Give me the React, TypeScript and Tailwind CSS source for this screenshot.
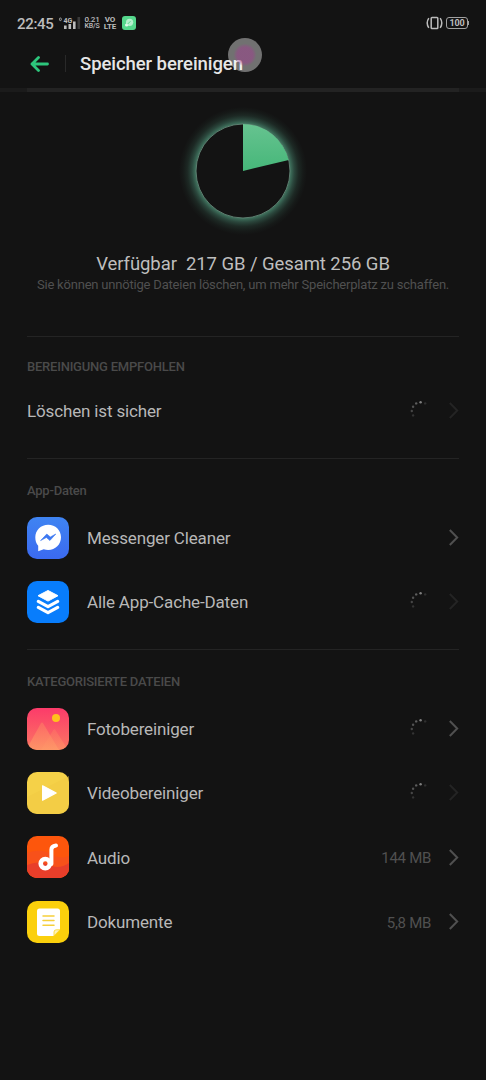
import type { ReactNode } from 'react'

interface Entry {
  label: string
  icon?: ReactNode
  size?: string
  loading?: boolean
  disabled?: boolean
}

const spinnerDots = [
  { x: 10, y: 1.2, opacity: 0.46 },
  { x: 5.6, y: 2.4, opacity: 0.32 },
  { x: 2.5, y: 5.7, opacity: 0.27 },
  { x: 1.2, y: 10, opacity: 0.22 },
  { x: 2.5, y: 14.4, opacity: 0.14 },
  { x: 14.6, y: 2.4, opacity: 0.12 },
]

function Spinner() {
  return (
    <svg className="h-5 w-5 shrink-0" viewBox="0 0 20 20" fill="#fff">
      {spinnerDots.map((dot, i) => (
        <circle key={i} cx={dot.x + 0.6} cy={dot.y} r="1.2" opacity={dot.opacity} />
      ))}
    </svg>
  )
}

function Chevron({ disabled }: { disabled?: boolean }) {
  return (
    <svg
      className={`h-[18px] w-[11px] shrink-0 ${disabled ? 'text-[#242424]' : 'text-[#505050]'}`}
      viewBox="0 0 11 18"
      fill="none"
      stroke="currentColor"
      strokeWidth="2"
    >
      <path d="M1.8 2 9.2 9.5l-7.4 7.5" />
    </svg>
  )
}

function MessengerIcon() {
  return (
    <svg className="h-[42px] w-[42px]" viewBox="0 0 42 42">
      <defs>
        <linearGradient id="messenger" x1="0" y1="0" x2="0" y2="1">
          <stop offset="0" stopColor="#3f84f2" />
          <stop offset="1" stopColor="#3b6af0" />
        </linearGradient>
      </defs>
      <rect width="42" height="42" rx="10" fill="url(#messenger)" />
      <path
        d="M21.2 7.8c7.2 0 12.8 5.4 12.8 12.5S28.4 33 21.2 33c-1.6 0-3.1-.3-4.5-.8L11.2 34.3V28.8C9.2 26.6 8.3 23.7 8.3 20.3c0-7.1 5.7-12.5 12.9-12.5z"
        fill="#fff"
      />
      <path d="m13.6 23.6 6.2-6.6 3.5 3 5.5-3-5.900 6.5-3.5-3z" fill="#3d78f1" stroke="#3d78f1" strokeWidth=".6" />
    </svg>
  )
}

function CacheIcon() {
  return (
    <svg className="h-[42px] w-[42px]" viewBox="0 0 42 42">
      <rect width="42" height="42" rx="10" fill="#087dfc" />
      <path d="m21 9.500 10 5.200-10 5.400-10-5.400z" fill="#fff" stroke="#fff" strokeWidth="1" strokeLinejoin="round" />
      <path d="m11.300 20.400 9.700 5.300 9.700-5.300M11.300 26.400 21 31.700l9.700-5.300" fill="none" stroke="#fff" strokeWidth="3.2" strokeLinecap="round" strokeLinejoin="round" />
    </svg>
  )
}

function PhotoIcon() {
  return (
    <svg className="h-[42px] w-[42px]" viewBox="0 0 42 42">
      <defs>
        <linearGradient id="photo" x1="0" y1="0" x2="0" y2="1">
          <stop offset="0" stopColor="#fc3b6a" />
          <stop offset="1" stopColor="#fb7762" />
        </linearGradient>
        <linearGradient id="hill" x1="0" y1="0" x2="0" y2="1">
          <stop offset="0" stopColor="#fd7065" />
          <stop offset="1" stopColor="#fe9a68" />
        </linearGradient>
        <clipPath id="photoClip">
          <rect width="42" height="42" rx="10" />
        </clipPath>
      </defs>
      <g clipPath="url(#photoClip)">
        <rect width="42" height="42" fill="url(#photo)" />
        <path d="M14 42 26.200 22.200q1.200-1.800 2.400 0L41 42z" fill="url(#hill)" opacity=".6" />
        <path d="M-1 42 13.800 15.400q1.200-1.900 2.400 0L32 42z" fill="url(#hill)" opacity=".8" />
        <circle cx="29" cy="10" r="4" fill="#ffc21c" />
      </g>
    </svg>
  )
}

function VideoIcon() {
  return (
    <svg className="h-[42px] w-[42px]" viewBox="0 0 42 42">
      <rect width="42" height="42" rx="10" fill="#f5d148" />
      <path d="M0 25 42 4v28a10 10 0 0 1-10 10H10A10 10 0 0 1 0 32z" fill="#f2ca42" opacity=".5" />
      <path d="M15.600 13.800v14.400L29.200 21z" fill="#fff" stroke="#fff" strokeWidth="1.2" strokeLinejoin="round" />
    </svg>
  )
}

function AudioIcon() {
  return (
    <svg className="h-[42px] w-[42px]" viewBox="0 0 42 42">
      <defs>
        <clipPath id="audioClip">
          <rect width="42" height="42" rx="10" />
        </clipPath>
      </defs>
      <g clipPath="url(#audioClip)">
        <rect width="42" height="42" fill="#fd560c" />
        <path d="M0 17q14-5 24 1t18 2v22H0z" fill="#f8511a" />
        <path d="M0 29q12-5 22 0t20-2v15H0z" fill="#e83e2a" />
      </g>
      <circle cx="18.3" cy="27.6" r="4.6" fill="none" stroke="#fff" strokeWidth="4.6" />
      <path d="M24.4 28V13.5q0-3.3 4.6-4" fill="none" stroke="#fff" strokeWidth="4" strokeLinecap="round" />
    </svg>
  )
}

function DocumentIcon() {
  return (
    <svg className="h-[42px] w-[42px]" viewBox="0 0 42 42">
      <rect width="42" height="42" rx="10" fill="#fbd00c" />
      <path d="M12.500 7.500h18A2.500 2.500 0 0 1 33 10v18.500L26.500 35h-14a2.500 2.500 0 0 1-2.500-2.500V10a2.500 2.500 0 0 1 2.500-2.500z" fill="#fff" />
      <path d="M27 34.800V31q0-2.200 2.200-2.200H33z" fill="#fff3b8" stroke="#fbd00c" strokeWidth=".7" />
      <path d="M16 15h11M16 19.600h11M16 24.200h11" stroke="#f6cf3a" strokeWidth="1.5" strokeLinecap="round" />
    </svg>
  )
}

const appEntries: Entry[] = [
  { label: 'Messenger Cleaner', icon: <MessengerIcon /> },
  { label: 'Alle App-Cache-Daten', icon: <CacheIcon />, loading: true, disabled: true },
]

const fileEntries: Entry[] = [
  { label: 'Fotobereiniger', icon: <PhotoIcon />, loading: true },
  { label: 'Videobereiniger', icon: <VideoIcon />, loading: true, disabled: true },
  { label: 'Audio', icon: <AudioIcon />, size: '144 MB' },
  { label: 'Dokumente', icon: <DocumentIcon />, size: '5,8 MB' },
]

function Row({ label, icon, size, loading, disabled }: Entry) {
  return (
    <li className="flex h-[64.3px] items-center">
      {icon && <span className="mr-[18px] shrink-0 pt-px">{icon}</span>}
      <span className="flex-1 pt-0.5 text-[17px] leading-6 tracking-[-0.15px] text-[#b8b8b8]">{label}</span>
      {size && <span className="mr-[17px] pt-[3px] text-[15px] leading-5 tracking-[-0.3px] text-[#505050]">{size}</span>}
      {loading && <span className="mr-[18px] pt-px"><Spinner /></span>}
      <Chevron disabled={disabled} />
    </li>
  )
}

function SectionTitle({ children }: { children: ReactNode }) {
  return <h2 className="text-[13px] leading-4 font-medium tracking-[-0.22px] text-[#4a4a4a]">{children}</h2>
}

function StatusBar() {
  return (
    <div className="flex h-[46px] items-center pr-[17px] pl-[17px] text-[#bcbcbc]">
      <span className="w-[41px] pt-px text-[15px] leading-4 font-medium tracking-[-0.3px]">22:45</span>
      <svg className="h-4 w-[23px]" viewBox="0 0 23 16" fill="currentColor">
        <rect x="1.5" y="3" width="1.8" height="2.6" rx=".8" fill="none" stroke="currentColor" strokeWidth=".8" />
        <text x="5.5" y="7.5" fontSize="7" fontWeight="700">4G</text>
        <rect x="6" y="10.5" width="2.6" height="3.5" />
        <rect x="10.5" y="9" width="2.6" height="5" />
        <rect x="15" y="6.5" width="2.6" height="7.5" />
        <rect x="19.5" y="2" width="2.6" height="12" fill="#3a3a3a" />
      </svg>
      <div className="ml-px w-5 text-center leading-[7px] font-medium">
        <p className="text-[8px] tracking-[-0.2px]">0.21</p>
        <p className="text-[7px] tracking-[-0.2px]">KB/S</p>
      </div>
      <div className="ml-px w-[14px] text-center text-[8px] leading-[7px] font-bold tracking-[-0.2px]">
        <p>VO</p>
        <p>LTE</p>
      </div>
      <svg className="ml-[5px] h-[14px] w-[14px]" viewBox="0 0 14 14">
        <rect width="14" height="14" rx="3" fill="#55d78c" />
        <circle cx="7.6" cy="6.3" r="3.6" fill="#b6efcd" />
        <circle cx="4.6" cy="9" r="1.6" fill="#e2f8eb" />
        <path d="m5.5 8.2 3-3" stroke="#55d78c" strokeWidth="1" />
      </svg>
      <svg className="ml-auto h-[14px] w-[17px]" viewBox="0 0 17 14" fill="none" stroke="currentColor" strokeWidth="1.5">
        <rect x="5.2" y="1.5" width="6.6" height="11" rx=".8" />
        <path d="M2.8 2.2Q-.4 7 2.8 11.8M14.2 2.2q3.2 4.8 0 9.6" />
      </svg>
      <div className="ml-[3px] flex h-3 w-[22px] items-center justify-center rounded-[3px] border border-[#a0a0a0] text-[9px] leading-none font-bold tracking-[-0.1px]">
        100
      </div>
      <div className="h-1 w-px bg-[#a0a0a0]" />
    </div>
  )
}

function StorageChart() {
  return (
    <svg className="mx-auto block h-[158px] w-[158px]" viewBox="0 0 158 158">
      <defs>
        <radialGradient id="glow">
          <stop offset=".74" stopColor="#4a8a70" stopOpacity=".8" />
          <stop offset=".8" stopColor="#45806a" stopOpacity=".48" />
          <stop offset=".87" stopColor="#3f7560" stopOpacity=".22" />
          <stop offset=".94" stopColor="#3f7560" stopOpacity=".07" />
          <stop offset="1" stopColor="#3f7560" stopOpacity="0" />
        </radialGradient>
        <linearGradient id="slice" x1="0" y1="0" x2="0" y2="1">
          <stop offset="0" stopColor="#66c390" />
          <stop offset="1" stopColor="#46b779" />
        </linearGradient>
      </defs>
      <circle cx="79" cy="79" r="64" fill="url(#glow)" />
      <circle cx="79" cy="79" r="47" fill="#131313" stroke="#5d7d6f" strokeWidth="1" />
      <path d="M79 79V32a47 47 0 0 1 45.7 36z" fill="url(#slice)" />
    </svg>
  )
}

export default function App() {
  return (
    <div className="relative h-[1080px] w-[486px] overflow-hidden bg-[#131313] font-[Roboto,sans-serif]">
      <StatusBar />

      <header className="flex h-[42px] items-center pb-[7px] pl-[30px]">
        <svg className="h-4 w-[19px]" viewBox="0 0 19 16" fill="none" stroke="#2dc67c" strokeWidth="2.8" strokeLinecap="round" strokeLinejoin="round">
          <path d="M17.5 8H2M8.5 1.5 2 8l6.500 6.500" />
        </svg>
        <div className="ml-4 h-[17px] w-px bg-[#292929]" />
        <h1 className="ml-[14px] pt-0.5 text-[18.5px] font-medium tracking-[-0.07px] text-[#e6e6e6]">Speicher bereinigen</h1>
      </header>
      <div className="h-1 bg-[#1b1b1b] px-[27px]">
        <div className="h-full bg-[#232323]" />
      </div>

      <section className="h-[244px] text-center">
        <StorageChart />
        <p className="pt-px text-[18.5px] leading-[26px] tracking-[-0.07px] whitespace-pre text-[#bebebe]">Verfügbar  217 GB / Gesamt 256 GB</p>
        <p className="text-[13px] leading-4 tracking-[-0.2px] text-[#505050]">Sie können unnötige Dateien löschen, um mehr Speicherplatz zu schaffen.</p>
      </section>

      <main className="px-[27px]">
        <section className="h-[122px] border-t border-[#242424] pt-[22px]">
          <SectionTitle>BEREINIGUNG EMPFOHLEN</SectionTitle>
          <ul className="pt-[3px]">
            <Row label="Löschen ist sicher" loading disabled />
          </ul>
        </section>

        <section className="h-[191px] border-t border-[#242424] pt-6">
          <SectionTitle>App-Daten</SectionTitle>
          <ul className="pt-[6px]">
            {appEntries.map((entry) => (
              <Row key={entry.label} {...entry} />
            ))}
          </ul>
        </section>

        <section className="border-t border-[#242424] pt-6">
          <SectionTitle>KATEGORISIERTE DATEIEN</SectionTitle>
          <ul className="pt-[6px]">
            {fileEntries.map((entry) => (
              <Row key={entry.label} {...entry} />
            ))}
          </ul>
        </section>
      </main>

      {/* touch indicator */}
      <div className="absolute top-[38px] left-[228px] flex h-[34px] w-[34px] items-center justify-center rounded-full bg-white/40">
        <div className="h-[22px] w-[22px] rounded-full bg-[radial-gradient(circle,#a0409080_50%,#a0409000_75%)]" />
      </div>
    </div>
  )
}
